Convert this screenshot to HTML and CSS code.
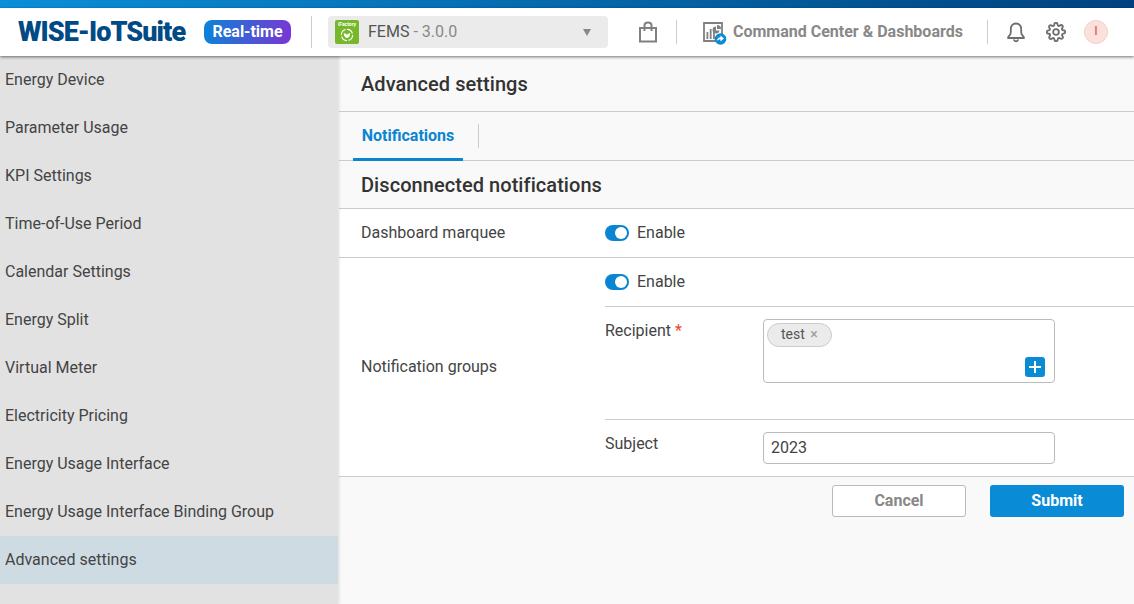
FILE: index.html
```html
<!DOCTYPE html>
<html lang="en">
<head>
  <meta charset="UTF-8" />
  <title>WISE-IoTSuite – Advanced settings</title>
  <link rel="stylesheet" href="styles.css">
</head>
<body>
  <div class="topline"></div>
  <header class="header">
    <div class="logo">WISE-IoTSuite</div>
    <div class="badge">Real-time</div>
    <div class="vline vline-tall"></div>
    <div class="app-select">
      <span class="app-icon">
        <span class="app-icon-text">iFactory</span>
        <svg width="14" height="14" viewBox="0 0 14 14">
          <circle cx="7" cy="7" r="5.6" fill="none" stroke="#fff" stroke-width="1.1" stroke-dasharray="7 1.6"/>
          <path d="M3.8 5.2c2 0 3 .8 3.2 2.4.2-1.6 1.200-2.400 3.200-2.400 0 2.800-1.200 4.600-3.200 4.800-2-.2-3.200-2-3.200-4.800z" fill="#fff"/>
        </svg>
      </span>
      <span class="app-name">FEMS <span class="app-version">- 3.0.0</span></span>
      <span class="caret"></span>
    </div>
    <svg class="icon-bag" width="20" height="22" viewBox="0 0 20 22" fill="none" stroke="#808080" stroke-width="2">
      <path d="M2 7h16v13.500H2z"/>
      <path d="M6.500 10V4.500Q6.500 1.500 10 1.500T13.500 4.500V10"/>
    </svg>
    <div class="vline vline-short vline-bag"></div>
    <svg class="icon-cc" width="24" height="24" viewBox="0 0 24 24">
      <path d="M1 1h18v18H1z" fill="none" stroke="#808080" stroke-width="1.800"/>
      <path d="M3.500 10h1.800v7H3.500zM6.800 7h1.800v10H6.800zM10.100 9h1.800v8h-1.800z" fill="#808080"/>
      <path d="M14 3a4 4 0 0 1 4 4h-4z" fill="#808080"/>
      <path d="M13 4.500a3.500 3.500 0 1 0 3.500 4h-3.500z" fill="#808080"/>
      <circle cx="17.500" cy="17" r="5.800" fill="#0a8bd6"/>
      <path d="M17.500 13.600l3.500 2.900-3.500 2.900v-1.800c-1.700 0-2.800.4-3.700 1.600.2-2.400 1.600-3.700 3.700-3.900z" fill="#fff"/>
    </svg>
    <div class="cc-label">Command Center &amp; Dashboards</div>
    <div class="vline vline-short vline-cc"></div>
    <svg class="icon-bell" width="20" height="22" viewBox="0 0 20 22" fill="none" stroke="#6e6e6e" stroke-width="1.800">
      <path d="M10 2.500c-3.300 0-5.200 2.500-5.200 5.700v3.300c0 1.800-1.100 3.200-2.600 4.500v1h15.600v-1c-1.500-1.300-2.600-2.700-2.600-4.500V8.200c0-3.200-1.900-5.700-5.200-5.700z"/>
      <path d="M7.800 18.500c.3 1.200 1.100 1.800 2.200 1.800s1.900-.6 2.200-1.800"/>
    </svg>
    <svg class="icon-gear" width="20" height="20" viewBox="0 0 24 24" fill="none" stroke="#6e6e6e" stroke-width="2.200" stroke-linejoin="round">
      <circle cx="12" cy="12" r="3.400"/>
      <path d="M19.400 15a1.650 1.650 0 0 0 .33 1.820l.06.06a2 2 0 1 1-2.830 2.830l-.06-.06a1.650 1.650 0 0 0-2.800 1.170V21a2 2 0 1 1-4 0v-.09a1.650 1.650 0 0 0-2.800-1.170l-.06.06a2 2 0 1 1-2.830-2.830l.06-.06a1.650 1.650 0 0 0-1.170-2.800H3a2 2 0 1 1 0-4h.09a1.650 1.650 0 0 0 1.170-2.800l-.06-.06a2 2 0 1 1 2.830-2.830l.06.06a1.650 1.650 0 0 0 2.800-1.170V3a2 2 0 1 1 4 0v.09a1.650 1.650 0 0 0 2.800 1.170l.06-.06a2 2 0 1 1 2.830 2.830l-.06.06a1.650 1.650 0 0 0 1.170 2.800H21a2 2 0 1 1 0 4h-.09a1.650 1.650 0 0 0-1.510 1z"/>
    </svg>
    <div class="avatar">I</div>
  </header>

  <div class="page">
    <nav class="sidebar">
      <a class="side-item">Energy Device</a>
      <a class="side-item">Parameter Usage</a>
      <a class="side-item">KPI Settings</a>
      <a class="side-item">Time-of-Use Period</a>
      <a class="side-item">Calendar Settings</a>
      <a class="side-item">Energy Split</a>
      <a class="side-item">Virtual Meter</a>
      <a class="side-item">Electricity Pricing</a>
      <a class="side-item">Energy Usage Interface</a>
      <a class="side-item">Energy Usage Interface Binding Group</a>
      <a class="side-item active">Advanced settings</a>
    </nav>

    <main class="content">
      <h1 class="page-title">Advanced settings</h1>
      <div class="tabs">
        <div class="tab">Notifications</div>
        <div class="tab-sep"></div>
      </div>
      <h2 class="section-title">Disconnected notifications</h2>

      <div class="form">
        <div class="row row-marquee">
          <div class="row-label">Dashboard marquee</div>
          <div class="switch-wrap">
            <span class="switch"></span>
            <span class="switch-text">Enable</span>
          </div>
        </div>
        <div class="row row-groups">
          <div class="row-label">Notification groups</div>
          <div class="group-body">
            <div class="sub sub-enable">
              <div class="switch-wrap">
                <span class="switch"></span>
                <span class="switch-text">Enable</span>
              </div>
            </div>
            <div class="sub sub-recipient">
              <label class="sub-label">Recipient <span class="req">*</span></label>
              <div class="tag-box">
                <span class="tag">test <span class="tag-x">×</span></span>
                <span class="add-btn">
                  <svg width="12" height="12" viewBox="0 0 12 12"><path d="M5 0h2v5h5v2H7v5H5V7H0V5h5z" fill="#fff"/></svg>
                </span>
              </div>
            </div>
            <div class="sub sub-subject">
              <label class="sub-label">Subject</label>
              <input class="text-input" type="text" value="2023">
            </div>
          </div>
        </div>
      </div>

      <div class="actions">
        <button class="btn btn-cancel">Cancel</button>
        <button class="btn btn-submit">Submit</button>
      </div>
    </main>
  </div>
</body>
</html>
```

FILE: styles.css
```css
* {
  box-sizing: border-box;
}
html, body {
  margin: 0;
  height: 604px;
  overflow: hidden;
}
body {
  font-family: Roboto, 'Liberation Sans', sans-serif;
  font-size: 16px;
  color: #444;
  background-color: #f9f9f9;
}
.topline {
  height: 8px;
  background: linear-gradient(90deg, #0a8fd8 0%, #00427f 100%);
}
.header {
  position: relative;
  z-index: 2;
  height: 48px;
  background-color: #fff;
  box-shadow: 0 1px 3px rgba(0, 0, 0, 0.55);
  display: flex;
  align-items: center;
  padding-left: 18px;
}
.logo {
  width: 168px;
  font-size: 27px;
  font-weight: 900;
  letter-spacing: -0.95px;
  color: #004a86;
  white-space: nowrap;
}
.badge {
  margin-left: 18px;
  width: 87px;
  height: 24px;
  border-radius: 8px;
  background: linear-gradient(100deg, #0a84d6 0%, #7a35d4 100%);
  color: #fff;
  font-size: 16px;
  font-weight: 700;
  line-height: 23px;
  text-align: center;
}
.vline {
  width: 1px;
  background-color: #ccc;
}
.vline-tall {
  height: 32px;
  margin-left: 20px;
}
.vline-short {
  height: 24px;
}
.app-select {
  margin-left: 16px;
  width: 280px;
  height: 32px;
  border-radius: 4px;
  background-color: #ebebeb;
  display: flex;
  align-items: center;
  padding-left: 7px;
}
.app-icon {
  width: 24px;
  height: 24px;
  margin-bottom: 1px;
  border-radius: 2px;
  background-color: #76b82a;
  display: flex;
  flex-direction: column;
  align-items: center;
  overflow: hidden;
}
.app-icon-text {
  font-size: 5px;
  line-height: 8px;
  font-weight: 700;
  color: #fff;
  white-space: nowrap;
}
.app-name {
  margin-left: 9px;
  padding-bottom: 2px;
  color: #555;
}
.app-version {
  color: #888;
}
.caret {
  margin-left: auto;
  margin-right: 17px;
  border-left: 4px solid transparent;
  border-right: 4px solid transparent;
  border-top: 7px solid #888;
}
.icon-bag {
  margin-left: 30px;
}
.vline-bag {
  margin-left: 18px;
}
.icon-cc {
  margin-left: 26px;
  margin-top: 4px;
}
.cc-label {
  margin-left: 6px;
  padding-bottom: 2px;
  width: 230px;
  color: #888;
  font-weight: 700;
  white-space: nowrap;
}
.vline-cc {
  margin-left: 24px;
}
.icon-bell {
  margin-left: 18px;
}
.icon-gear {
  margin-left: 20px;
}
.avatar {
  margin-left: 18px;
  width: 24px;
  height: 24px;
  border-radius: 50%;
  background-color: #fbe0dc;
  border: 1px solid #f3cfca;
  color: #dc6a5c;
  font-size: 12px;
  font-weight: 500;
  line-height: 21px;
  text-align: center;
}
.page {
  display: flex;
  height: 548px;
}
.sidebar {
  width: 338px;
  background-color: #e2e2e2;
  box-shadow: 1px 0 3px rgba(0, 0, 0, 0.12);
  position: relative;
  z-index: 1;
}
.side-item {
  display: block;
  height: 48px;
  line-height: 47px;
  padding-left: 5px;
  color: #444;
}
.side-item.active {
  background-color: #cfdbe3;
}
.content {
  flex: 1;
  padding-left: 1px;
}
.page-title {
  margin: 0;
  height: 56px;
  padding: 0 0 0 22px;
  line-height: 56px;
  font-size: 20px;
  font-weight: 500;
  letter-spacing: 0.06px;
  color: #333;
  border-bottom: 1px solid #ccc;
}
.tabs {
  height: 49px;
  display: flex;
  align-items: center;
  padding-left: 14px;
  border-bottom: 1px solid #ccc;
}
.tab {
  width: 110px;
  height: 48px;
  line-height: 45px;
  text-align: center;
  color: #0a85cf;
  font-weight: 700;
  border-bottom: 3px solid #0a85cf;
  margin-top: 1px;
}
.tab-sep {
  width: 1px;
  height: 24px;
  margin-left: 15px;
  background-color: #ccc;
}
.section-title {
  margin: 0;
  height: 48px;
  padding-left: 22px;
  line-height: 48px;
  font-size: 20px;
  font-weight: 500;
  letter-spacing: 0.06px;
  color: #333;
  border-bottom: 1px solid #ccc;
}
.form {
  background-color: #fff;
}
.row {
  display: flex;
  align-items: center;
  padding-left: 22px;
  border-bottom: 1px solid #ccc;
}
.row-marquee {
  height: 49px;
}
.row-groups {
  height: 219px;
}
.row-label {
  width: 244px;
  flex-shrink: 0;
  padding-bottom: 2px;
}
.group-body {
  flex: 1;
  height: 100%;
}
.switch-wrap {
  display: flex;
  align-items: center;
  gap: 8px;
}
.switch {
  position: relative;
  width: 24px;
  height: 16px;
  border-radius: 8px;
  background-color: #0a85d1;
}
.switch::after {
  content: "";
  position: absolute;
  top: 2px;
  right: 2px;
  width: 12px;
  height: 12px;
  border-radius: 50%;
  background-color: #fff;
}
.switch-text {
  padding-bottom: 2px;
}
.sub {
  border-bottom: 1px solid #ccc;
}
.sub:last-child {
  border-bottom: none;
}
.sub-enable {
  height: 49px;
  display: flex;
  align-items: center;
}
.sub-recipient {
  height: 113px;
  display: flex;
  padding-top: 12px;
}
.sub-subject {
  height: 56px;
  display: flex;
  padding-top: 12px;
}
.sub-label {
  width: 158px;
  flex-shrink: 0;
  line-height: 24px;
}
.req {
  color: #e8482f;
}
.tag-box {
  position: relative;
  width: 292px;
  height: 64px;
  border: 1px solid #bbb;
  border-radius: 4px;
  padding: 3px;
}
.tag {
  display: inline-block;
  height: 24px;
  width: 65px;
  padding: 0 0 0 13px;
  border: 1px solid #ccc;
  border-radius: 12px;
  background-color: #ebebeb;
  font-size: 14px;
  line-height: 20px;
  color: #555;
}
.tag-x {
  margin-left: 2px;
  color: #999;
}
.add-btn {
  position: absolute;
  right: 9px;
  bottom: 5px;
  width: 20px;
  height: 20px;
  border-radius: 3px;
  background-color: #0a8bd6;
  display: flex;
  align-items: center;
  justify-content: center;
}
.text-input {
  width: 292px;
  height: 32px;
  border: 1px solid #bbb;
  border-radius: 4px;
  padding: 0 7px 2px;
  font-family: inherit;
  font-size: 16px;
  color: #444;
  background-color: #fff;
}
.actions {
  display: flex;
  justify-content: flex-end;
  gap: 24px;
  padding: 8px 10px 0 0;
}
.btn {
  height: 32px;
  padding: 0 0 2px;
  border-radius: 3px;
  font-family: inherit;
  font-size: 16px;
  font-weight: 700;
}
.btn-cancel {
  width: 134px;
  background-color: #fff;
  border: 1px solid #bbb;
  color: #888;
}
.btn-submit {
  width: 134px;
  background-color: #0a8bd6;
  border: none;
  color: #fff;
}
```
